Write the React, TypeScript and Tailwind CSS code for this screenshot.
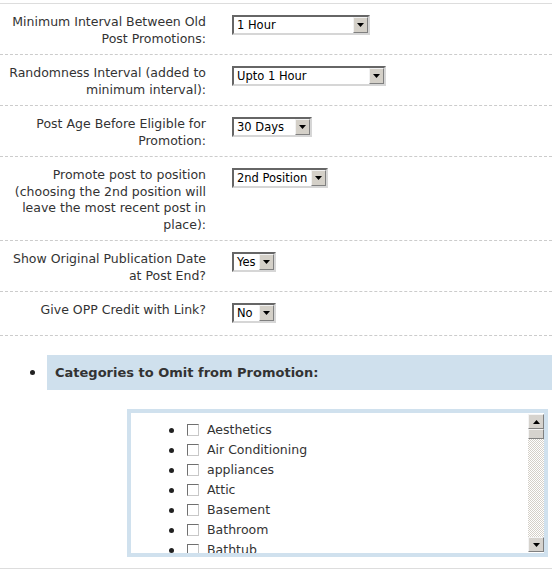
const rows = [
  { label: "Minimum Interval Between Old Post Promotions:", value: "1 Hour", width: "w-[138px]" },
  { label: "Randomness Interval (added to minimum interval):", value: "Upto 1 Hour", width: "w-[154px]" },
  { label: "Post Age Before Eligible for Promotion:", value: "30 Days", width: "w-[80px]" },
  {
    label: "Promote post to position (choosing the 2nd position will leave the most recent post in place):",
    value: "2nd Position",
    width: "w-[96px]",
  },
  { label: "Show Original Publication Date at Post End?", value: "Yes", width: "w-[44px]" },
  { label: "Give OPP Credit with Link?", value: "No", width: "w-[44px]" },
];

const categories = ["Aesthetics", "Air Conditioning", "appliances", "Attic", "Basement", "Bathroom", "Bathtub"];

function Arrow({ up = false }: { up?: boolean }) {
  return (
    <svg width="7" height="4" viewBox="0 0 7 4" className={up ? "rotate-180" : ""}>
      <path d="M0 0h7L3.5 4z" fill="#000" />
    </svg>
  );
}

function FakeSelect({ value, width }: { value: string; width: string }) {
  return (
    <div
      className={`flex h-[20px] ${width} items-stretch border-2 border-t-[#666] border-l-[#666] border-r-[#d6d6d6] border-b-[#d6d6d6] bg-white`}
    >
      <span className="flex-1 overflow-hidden whitespace-nowrap pl-[3px] text-[11.5px] leading-[16px] text-black">
        {value}
      </span>
      <span className="flex w-[15px] shrink-0 items-center justify-center border border-t-[#f2f2f2] border-l-[#f2f2f2] border-r-[#808080] border-b-[#808080] bg-[#d4d0c8]">
        <Arrow />
      </span>
    </div>
  );
}

function ScrollButton({ up = false }: { up?: boolean }) {
  return (
    <div className="flex h-[15px] items-center justify-center border border-t-[#f4f4f4] border-l-[#f4f4f4] border-r-[#808080] border-b-[#808080] bg-[#d6d3ce]">
      <Arrow up={up} />
    </div>
  );
}

export default function App() {
  return (
    <div className="min-h-[584px] w-[556px] bg-white font-['DejaVu_Sans',sans-serif] text-[12.5px] text-[#333]">
      <div className="w-[552px] pt-[3px]">
        <div className="border-t border-[#dddddd]" />

        {rows.map((row) => (
          <div key={row.label} className="flex border-b border-dashed border-[#cccccc]">
            <div className="w-[206px] shrink-0 pt-[10px] pb-[7px] text-right leading-[16.5px]">{row.label}</div>
            <div className="pl-[26px] pt-[11px] pb-[12px]">
              <FakeSelect value={row.value} width={row.width} />
            </div>
          </div>
        ))}

        <div className="mt-[19px] flex items-center">
          <div className="flex w-[47px] pl-[30px]">
            <span className="h-[5px] w-[5px] rounded-full bg-[#222]" />
          </div>
          <h3 className="flex h-[35px] flex-1 items-center bg-[#cfe0ed] pl-[8px] text-[13px] font-bold text-[#333]">
            Categories to Omit from Promotion:
          </h3>
        </div>

        <div className="ml-[127px] mt-[19px] flex h-[148px] w-[421px] border-4 border-[#d0e1ee] bg-white">
          <ul className="flex-1 overflow-hidden pt-[7px]">
            {categories.map((cat) => (
              <li key={cat} className="flex h-[20px] items-center">
                <span className="ml-[38px] h-[5px] w-[5px] rounded-full bg-[#222]" />
                <span className="ml-[13px] h-[12px] w-[12px] border border-t-[#707070] border-l-[#707070] border-r-[#c8c8c8] border-b-[#c8c8c8] bg-white" />
                <span className="ml-[8px] leading-[20px]">{cat}</span>
              </li>
            ))}
          </ul>
          <div className="flex w-[16px] flex-col py-[1px]">
            <ScrollButton up />
            <div className="h-[10px] border border-t-[#f4f4f4] border-l-[#f4f4f4] border-r-[#808080] border-b-[#808080] bg-[#d6d3ce]" />
            <div className="flex-1 bg-[repeating-conic-gradient(#d4d0c8_0%_25%,#ffffff_0%_50%)] bg-[length:2px_2px]" />
            <ScrollButton />
          </div>
        </div>

        <div className="mt-[11px] border-t border-[#dddddd]" />
      </div>
    </div>
  );
}
